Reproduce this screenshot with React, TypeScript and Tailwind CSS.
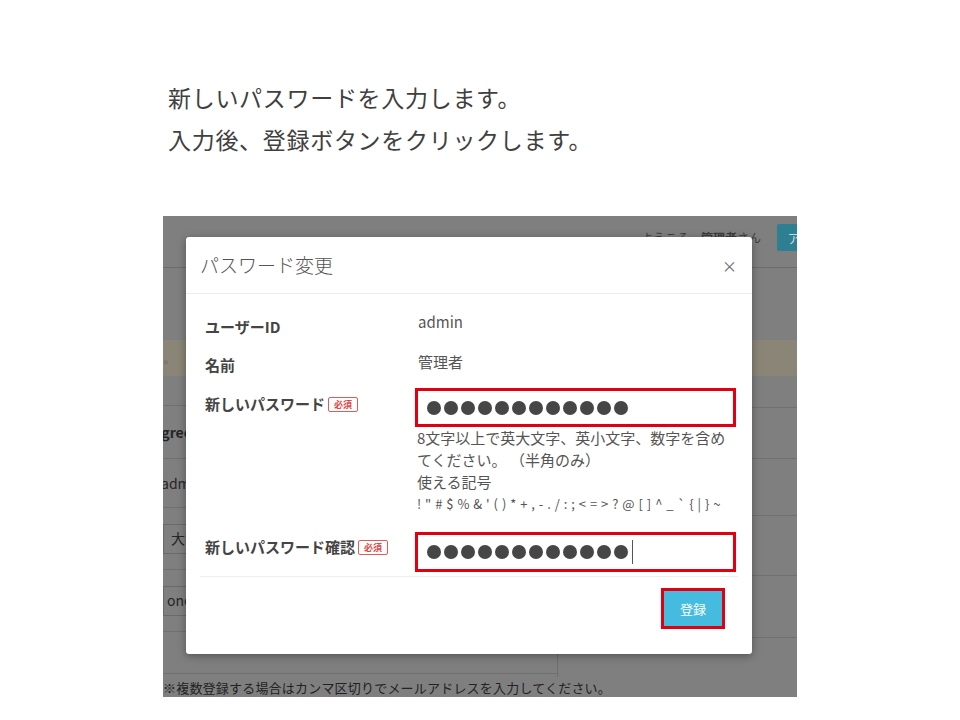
import React from "react";

const jp = { fontFamily: '"Noto Sans CJK JP", "Noto Sans", sans-serif' };

const Dots = ({ cursor }: { cursor?: boolean }) => (
  <div className="flex items-center gap-[3px]">
    {Array.from({ length: 12 }).map((_, i) => (
      <span key={i} className="block h-[14px] w-[14px] rounded-full bg-[#464646]" />
    ))}
    {cursor && <span className="ml-[1px] block h-[24px] w-[1px] bg-[#555]" />}
  </div>
);

const Badge = () => (
  <span className="ml-[3px] inline-flex h-[15px] w-[30px] items-center justify-center rounded-[2px] border border-[#e25b5b] text-[9px] font-bold leading-none text-[#e04848]">
    必須
  </span>
);

const Modal = () => (
  <div className="absolute left-[23px] top-[21px] flex h-[417px] w-[566px] flex-col rounded-[3px] bg-white shadow-[0_2px_8px_rgba(0,0,0,0.35)]">
    <div className="flex h-[57px] items-center justify-between border-b border-[#ececec] px-[14px]">
      <span className="text-[19px] font-light text-[#555]">パスワード変更</span>
      <span className="mr-[1px] text-[15px] leading-none text-[#666]">×</span>
    </div>

    <div className="px-[14px] pt-[14px]">
      <div className="flex h-[38px]">
        <div className="w-[215px] pl-[5px] pt-[9px] text-[15px] font-bold leading-[20px] text-[#444]">
          ユーザーID
        </div>
        <div className="pl-[3px] pt-[4px] text-[15px] leading-[20px] text-[#555]">admin</div>
      </div>
      <div className="flex h-[38px]">
        <div className="w-[215px] pl-[5px] pt-[9px] text-[15px] font-bold leading-[20px] text-[#444]">名前</div>
        <div className="pl-[3px] pt-[6px] text-[15px] leading-[20px] text-[#555]">管理者</div>
      </div>

      <div className="flex">
        <div className="flex w-[215px] items-center self-start pl-[5px] pt-[10px] text-[15px] font-bold leading-[20px] text-[#444]">
          新しいパスワード
          <Badge />
        </div>
        <div className="w-[321px] pt-[4px]">
          <div className="flex h-[39px] items-center border-[3px] border-[#e0000f] pl-[9px]">
            <Dots />
          </div>
          <div className="pl-[2px] text-[15px] leading-[22px] text-[#555]">
            <div>8文字以上で英大文字、英小文字、数字を含め</div>
            <div>てください。 （半角のみ）</div>
            <div>使える記号</div>
            <div className="text-[13px] tracking-[0.5px]">
              ! " # $ % &amp; ' ( ) * + , - . / : ; &lt; = &gt; ? @ [ ] ^ _ ` {"{"} | {"}"} ~
            </div>
          </div>
        </div>
      </div>

      <div className="mt-[17px] flex">
        <div className="flex w-[215px] items-center self-start pl-[5px] pt-[5px] text-[15px] font-bold leading-[20px] text-[#444]">
          新しいパスワード確認
          <Badge />
        </div>
        <div className="w-[321px]">
          <div className="flex h-[40px] items-center border-[3px] border-[#e0000f] pl-[9px]">
            <Dots cursor />
          </div>
        </div>
      </div>
      <div className="mt-[4px] h-[1px] bg-[#eeeeee]" />
    </div>

    <div className="flex justify-end pr-[27px] pt-[11px]">
      <div className="border-[3px] border-[#e0000f]">
        <div className="flex h-[35px] w-[58px] items-center justify-center bg-[#45bcdf] text-[13px] text-white">
          登録
        </div>
      </div>
    </div>
  </div>
);

const Screenshot = () => (
  <div className="relative h-[481px] w-[634px] overflow-hidden bg-[#7f7f7f]">
    <div className="flex h-[52px] items-start justify-end border-b border-[#6c6c6c] pt-[8px]">
      <span className="mt-[5px] text-[12px] text-[#3c3c3c]">ようこそ　<b>管理者</b>さん</span>
      <span className="-mr-[14px] ml-[16px] flex h-[27px] w-[34px] items-center justify-center rounded-[2px] bg-[#2f7f92] text-[13px] text-[#bfdde4]">
        ア
      </span>
    </div>
    <div className="h-[72px]" />
    <div className="flex h-[36px] items-center bg-[#8a8577] pl-[1px] text-[10px] text-[#5a5a5a]">。</div>
    <div className="flex">
      <div className="w-[395px] border-r border-[#6e6e6e]">
        <div className="h-[29px]" />
        <div className="flex h-[53px] items-center border-t border-[#707070] -ml-[10px] text-[14px] font-bold text-[#262626]">
          agreement
        </div>
        <div className="flex h-[49px] items-center border-t border-[#707070] -ml-[2px] text-[14px] text-[#262626]">
          admin
        </div>
        <div className="flex h-[62px] items-center border-t border-[#707070]">
          <div className="flex h-[30px] w-[380px] items-center border border-[#6a6a6a] pl-[7px] text-[14px] text-[#262626]">
            大町
          </div>
        </div>
        <div className="flex h-[62px] items-center border-t border-[#707070]">
          <div className="flex h-[30px] w-[380px] items-center border border-[#6a6a6a] pl-[3px] text-[14px] text-[#262626]">
            one
          </div>
        </div>
        <div className="h-[43px] border-t border-[#707070] border-b" />
      </div>
      <div className="flex-1">
        <div className="h-[31px]" />
        <div className="h-[51px] border-t border-[#707070]" />
        <div className="h-[57px] border-t border-[#707070]" />
        <div className="h-[60px] border-t border-[#707070]" />
        <div className="h-[62px] border-t border-[#707070]" />
        <div className="h-[40px] border-t border-[#707070]" />
      </div>
    </div>
    <div className="mt-[3px] text-[13px] leading-[16px] tracking-[0.2px] text-[#222]">
      ※複数登録する場合はカンマ区切りでメールアドレスを入力してください。
    </div>
    <Modal />
  </div>
);

export default function App() {
  return (
    <div className="flex h-[720px] w-[960px] flex-col bg-white" style={jp}>
      <div className="pl-[168px] pt-[76px] text-[23px] leading-[42px] tracking-[0.7px] text-[#404040]">
        <div>新しいパスワードを入力します。</div>
        <div>入力後、登録ボタンをクリックします。</div>
      </div>
      <div className="ml-[163px] mt-[56px]">
        <Screenshot />
      </div>
    </div>
  );
}
